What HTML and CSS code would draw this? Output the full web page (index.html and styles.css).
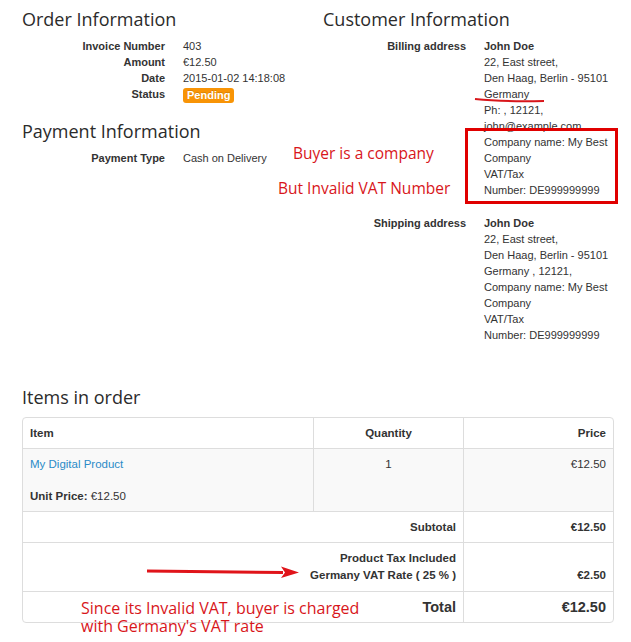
FILE: index.html
```html
<!DOCTYPE html>
<html>
<head>
  <title>Order Details</title>
  <link rel="stylesheet" href="styles.css">
</head>
<body>
  <div class="page">
    <div class="info">
      <div class="col">
        <h3 class="heading">Order Information</h3>
        <dl class="pairs">
          <dt>Invoice Number</dt>
          <dd>403</dd>
          <dt>Amount</dt>
          <dd>&euro;12.50</dd>
          <dt>Date</dt>
          <dd>2015-01-02 14:18:08</dd>
          <dt>Status</dt>
          <dd><span class="badge">Pending</span></dd>
        </dl>

        <h3 class="heading section-gap">Payment Information</h3>
        <dl class="pairs">
          <dt>Payment Type</dt>
          <dd>Cash on Delivery</dd>
        </dl>
      </div>

      <div class="col">
        <h3 class="heading">Customer Information</h3>
        <dl class="pairs addresses">
          <dt>Billing address</dt>
          <dd>
            <strong>John Doe</strong><br>
            22, East street,<br>
            Den Haag, Berlin - 95101<br>
            Germany<br>
            Ph: , 12121,<br>
            john@example.com<br>
            Company name: My Best Company<br>
            VAT/Tax <span class="nowrap">Number: DE999999999</span>
          </dd>
          <dt>Shipping address</dt>
          <dd>
            <strong>John Doe</strong><br>
            22, East street,<br>
            Den Haag, Berlin - 95101<br>
            Germany , 12121,<br>
            Company name: My Best Company<br>
            VAT/Tax <span class="nowrap">Number: DE999999999</span>
          </dd>
        </dl>
      </div>
    </div>

    <h3 class="heading items-title">Items in order</h3>
    <table class="items">
      <colgroup>
        <col class="col-item">
        <col class="col-qty">
        <col class="col-price">
      </colgroup>
      <thead>
        <tr>
          <th>Item</th>
          <th class="center">Quantity</th>
          <th class="right">Price</th>
        </tr>
      </thead>
      <tbody>
        <tr class="striped">
          <td>
            <a href="#" class="product">My Digital Product</a>
            <div class="unit-price"><strong>Unit Price:</strong> &euro;12.50</div>
          </td>
          <td class="center">1</td>
          <td class="right">&euro;12.50</td>
        </tr>
        <tr>
          <td colspan="2" class="right"><strong>Subtotal</strong></td>
          <td class="right"><strong>&euro;12.50</strong></td>
        </tr>
        <tr class="tax">
          <td colspan="2" class="right"><strong>Product Tax Included<br>Germany VAT Rate ( 25 % )</strong></td>
          <td class="right bottom"><strong>&euro;2.50</strong></td>
        </tr>
        <tr class="total">
          <td colspan="2" class="right">Total</td>
          <td class="right">&euro;12.50</td>
        </tr>
      </tbody>
    </table>

    <!-- annotations drawn over the page -->
    <svg class="note-underline" width="72" height="8" viewBox="0 0 72 8">
      <path d="M1 3 Q 30 6 70 5" fill="none" stroke="#d8161b" stroke-width="2"/>
    </svg>
    <div class="note-box"></div>
    <div class="note note-company">Buyer is a company</div>
    <div class="note note-vat">But Invalid VAT Number</div>
    <svg class="note-arrow" width="156" height="14" viewBox="0 0 156 14">
      <path d="M2 6 L138 7.5" fill="none" stroke="#e0141a" stroke-width="3"/>
      <path d="M136 1.5 L154 7.5 L136 13 L140 7.5 Z" fill="#e0141a"/>
    </svg>
    <div class="note note-charged">Since its Invalid VAT, buyer is charged<br>with Germany's VAT rate</div>
  </div>
</body>
</html>
```

FILE: styles.css
```css
body {
  margin: 0;
  background-color: #fff;
  color: #333;
  font-family: "Liberation Sans", Arial, sans-serif;
  font-size: 11px;
  line-height: 16px;
}

.page {
  position: relative;
  min-height: 642px;
  box-sizing: border-box;
  padding: 8px 19px 0 22px;
}

.heading {
  margin: 0 0 8px;
  font-family: "Open Sans", sans-serif;
  font-size: 18px;
  font-weight: 500;
  line-height: 22px;
  color: #2b2b2b;
}

.section-gap {
  margin-top: 17px;
}

.info {
  display: grid;
  grid-template-columns: 301px 1fr;
}

.pairs {
  display: grid;
  grid-template-columns: 143px 1fr;
  column-gap: 18px;
  margin: 0;
}

.pairs dt {
  font-weight: bold;
  text-align: right;
}

.pairs dd {
  margin: 0;
}

.addresses {
  row-gap: 17px;
}

.nowrap {
  white-space: nowrap;
}

.badge {
  display: inline-block;
  padding: 0 4px;
  border-radius: 3px;
  background-color: #f89406;
  color: #fff;
  font-weight: bold;
  line-height: 15px;
  vertical-align: middle;
  text-shadow: 0 -1px 0 rgba(0,0,0,0.15);
}

.items-title {
  margin-top: 43px;
  margin-bottom: 9px;
}

/* table */
.items {
  width: 590px;
  table-layout: fixed;
  border-collapse: separate;
  border-spacing: 0;
  border: 1px solid #ddd;
  border-radius: 4px;
  font-size: 11.5px;
}

.col-item {
  width: 290px;
}

.col-qty,
.col-price {
  width: 150px;
}

.items th,
.items td {
  padding: 7px;
  border-top: 1px solid #ddd;
  border-left: 1px solid #ddd;
  text-align: left;
  vertical-align: top;
  line-height: 16px;
}

.items thead th {
  border-top: none;
  font-weight: bold;
}

.items th:first-child,
.items td:first-child {
  border-left: none;
}

.items .center {
  text-align: center;
}

.items .right {
  text-align: right;
}

.items .bottom {
  vertical-align: bottom;
}

.striped td {
  background-color: #f9f9f9;
}

.product {
  color: #2a8bc8;
  text-decoration: none;
}

.unit-price {
  margin-top: 16px;
}

.tax td {
  line-height: 17px;
}

.total td {
  font-size: 14.5px;
  font-weight: bold;
}

/* annotations */
.note {
  position: absolute;
  color: #d8161b;
  font-family: "Open Sans", sans-serif;
  font-size: 15.5px;
  line-height: 20px;
  white-space: nowrap;
}

.note-company {
  left: 293px;
  top: 143px;
}

.note-vat {
  left: 278px;
  top: 178px;
}

.note-charged {
  left: 81px;
  top: 599px;
  font-size: 16px;
  line-height: 18px;
}

.note-box {
  position: absolute;
  left: 465px;
  top: 128px;
  width: 153px;
  height: 76px;
  box-sizing: border-box;
  border: 3px solid #e00000;
}

.note-underline {
  position: absolute;
  left: 474px;
  top: 96px;
}

.note-arrow {
  position: absolute;
  left: 145px;
  top: 565px;
}
```
